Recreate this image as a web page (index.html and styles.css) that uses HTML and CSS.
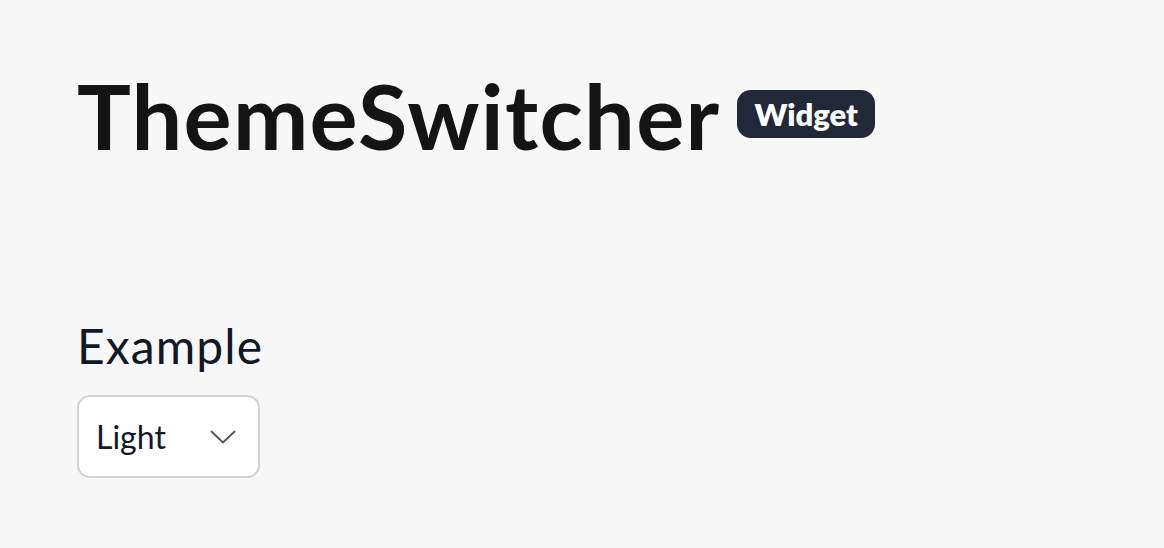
FILE: index.html
```html
<!DOCTYPE html>
<html>
<head>
<meta charset="utf-8">
<link rel="stylesheet" href="styles.css">
</head>
<body>
<main class="page">
  <header class="heading">
    <h1 class="title">ThemeSwitcher</h1>
    <span class="badge">Widget</span>
  </header>
  <section class="example">
    <h2 class="example-title">Example</h2>
    <div class="select">
      <span class="select-value">Light</span>
      <svg class="chevron" width="26" height="14" viewBox="0 0 26 14" fill="none" stroke="#555" stroke-width="1.8" stroke-linecap="round" stroke-linejoin="round"><path d="M1.5 1.5 L13 12.5 L24.5 1.5"/></svg>
    </div>
  </section>
</main>
</body>
</html>
```
FILE: styles.css
```css
html, body {
  margin: 0;
  padding: 0;
  background: #f7f7f7;
}
body {
  font-family: "Lato", "Noto Sans", sans-serif;
}
.page {
  padding: 58px 77px 0 77px;
}
.heading {
  display: flex;
  align-items: center;
  gap: 17px;
}
.title {
  margin: 0;
  font-size: 90px;
  font-weight: 700;
  color: #141414;
  letter-spacing: 1.3px;
  line-height: 115px;
}
.badge {
  background: #232838;
  color: #fff;
  font-weight: 800;
  font-size: 31px;
  height: 48px;
  line-height: 48px;
  padding: 0 17px;
  border-radius: 14px;
  margin-top: -4px;
}
.example {
  margin-top: 145px;
}
.example-title {
  margin: 0 0 21px 0;
  font-size: 48px;
  font-weight: 400;
  color: #111827;
  line-height: 56px;
  letter-spacing: 1.1px;
}
.select {
  display: flex;
  align-items: center;
  justify-content: space-between;
  box-sizing: border-box;
  width: 183px;
  height: 83px;
  padding: 0 22px 0 17px;
  background: #fff;
  border: 2px solid #d2d2d6;
  border-radius: 13px;
}
.select-value {
  font-size: 32px;
  color: #111827;
}
.chevron {
  display: block;
}
```
